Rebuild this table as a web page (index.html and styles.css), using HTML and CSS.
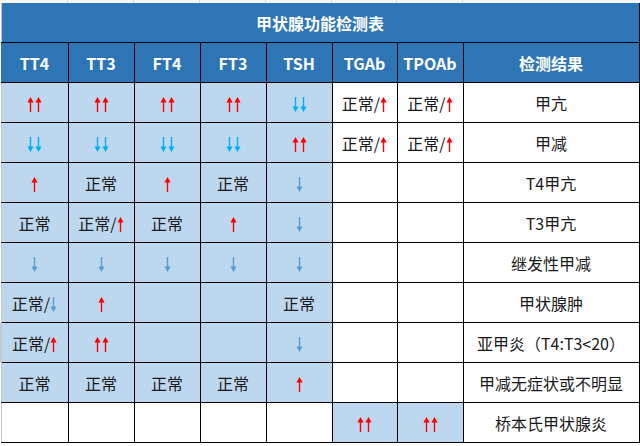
FILE: index.html
```html
<!DOCTYPE html>
<html lang="zh-CN">
<head>
<meta charset="utf-8">
<title>甲状腺功能检测表</title>
<link rel="stylesheet" href="styles.css">
</head>
<body>
<svg class="defs" width="0" height="0" aria-hidden="true">
  <defs>
    <symbol id="up" viewBox="0 0 7 15">
      <path d="M3.5 0 L0.4 5.6 L2.8 5.6 L2.8 15 L4.2 15 L4.2 5.6 L6.6 5.6 Z"/>
    </symbol>
    <symbol id="dn" viewBox="0 0 7 15">
      <path d="M3.5 15 L0.4 9.4 L2.8 9.4 L2.8 0 L4.2 0 L4.2 9.4 L6.6 9.4 Z"/>
    </symbol>
  </defs>
</svg>
<div class="strip"><span></span><span></span><span></span><span></span><span></span><span></span><span></span><span></span></div>
<table class="sheet">
  <colgroup>
    <col class="c67"><col class="c66"><col class="c66"><col class="c66"><col class="c66"><col class="c65"><col class="c66"><col class="c176">
  </colgroup>
  <tr class="title"><td colspan="8">甲状腺功能检测表</td></tr>
  <tr class="head">
    <td>TT4</td><td>TT3</td><td>FT4</td><td>FT3</td><td>TSH</td><td>TGAb</td><td>TPOAb</td><td>检测结果</td>
  </tr>
  <tr>
    <td class="b"><span class="r"><svg class="ar"><use href="#up"/></svg><svg class="ar"><use href="#up"/></svg></span></td>
    <td class="b"><span class="r"><svg class="ar"><use href="#up"/></svg><svg class="ar"><use href="#up"/></svg></span></td>
    <td class="b"><span class="r"><svg class="ar"><use href="#up"/></svg><svg class="ar"><use href="#up"/></svg></span></td>
    <td class="b"><span class="r"><svg class="ar"><use href="#up"/></svg><svg class="ar"><use href="#up"/></svg></span></td>
    <td class="b"><span class="c"><svg class="ar"><use href="#dn"/></svg><svg class="ar"><use href="#dn"/></svg></span></td>
    <td>正常/<span class="r"><svg class="ar"><use href="#up"/></svg></span></td>
    <td>正常/<span class="r"><svg class="ar"><use href="#up"/></svg></span></td>
    <td>甲亢</td>
  </tr>
  <tr>
    <td class="b"><span class="c"><svg class="ar"><use href="#dn"/></svg><svg class="ar"><use href="#dn"/></svg></span></td>
    <td class="b"><span class="c"><svg class="ar"><use href="#dn"/></svg><svg class="ar"><use href="#dn"/></svg></span></td>
    <td class="b"><span class="c"><svg class="ar"><use href="#dn"/></svg><svg class="ar"><use href="#dn"/></svg></span></td>
    <td class="b"><span class="c"><svg class="ar"><use href="#dn"/></svg><svg class="ar"><use href="#dn"/></svg></span></td>
    <td class="b"><span class="r"><svg class="ar"><use href="#up"/></svg><svg class="ar"><use href="#up"/></svg></span></td>
    <td>正常/<span class="r"><svg class="ar"><use href="#up"/></svg></span></td>
    <td>正常/<span class="r"><svg class="ar"><use href="#up"/></svg></span></td>
    <td>甲减</td>
  </tr>
  <tr>
    <td class="b"><span class="r"><svg class="ar"><use href="#up"/></svg></span></td>
    <td class="b">正常</td>
    <td class="b"><span class="r"><svg class="ar"><use href="#up"/></svg></span></td>
    <td class="b">正常</td>
    <td class="b"><span class="s"><svg class="ar"><use href="#dn"/></svg></span></td>
    <td></td><td></td>
    <td>T4甲亢</td>
  </tr>
  <tr>
    <td class="b">正常</td>
    <td class="b">正常/<span class="r"><svg class="ar"><use href="#up"/></svg></span></td>
    <td class="b">正常</td>
    <td class="b"><span class="r"><svg class="ar"><use href="#up"/></svg></span></td>
    <td class="b"><span class="s"><svg class="ar"><use href="#dn"/></svg></span></td>
    <td></td><td></td>
    <td>T3甲亢</td>
  </tr>
  <tr>
    <td class="b"><span class="s"><svg class="ar"><use href="#dn"/></svg></span></td>
    <td class="b"><span class="s"><svg class="ar"><use href="#dn"/></svg></span></td>
    <td class="b"><span class="s"><svg class="ar"><use href="#dn"/></svg></span></td>
    <td class="b"><span class="s"><svg class="ar"><use href="#dn"/></svg></span></td>
    <td class="b"><span class="s"><svg class="ar"><use href="#dn"/></svg></span></td>
    <td></td><td></td>
    <td>继发性甲减</td>
  </tr>
  <tr>
    <td class="b">正常/<span class="s"><svg class="ar"><use href="#dn"/></svg></span></td>
    <td class="b"><span class="r"><svg class="ar"><use href="#up"/></svg></span></td>
    <td class="b"></td>
    <td class="b"></td>
    <td class="b">正常</td>
    <td></td><td></td>
    <td>甲状腺肿</td>
  </tr>
  <tr>
    <td class="b sel">正常/<span class="r"><svg class="ar"><use href="#up"/></svg></span></td>
    <td class="b"><span class="r"><svg class="ar"><use href="#up"/></svg><svg class="ar"><use href="#up"/></svg></span></td>
    <td class="b"></td>
    <td class="b"></td>
    <td class="b"><span class="s"><svg class="ar"><use href="#dn"/></svg></span></td>
    <td></td><td></td>
    <td>亚甲炎（T4:T3&lt;20）</td>
  </tr>
  <tr>
    <td class="b">正常</td>
    <td class="b">正常</td>
    <td class="b">正常</td>
    <td class="b">正常</td>
    <td class="b"><span class="r"><svg class="ar"><use href="#up"/></svg></span></td>
    <td></td><td></td>
    <td>甲减无症状或不明显</td>
  </tr>
  <tr>
    <td></td><td></td><td></td><td></td><td></td>
    <td class="b"><span class="r"><svg class="ar"><use href="#up"/></svg><svg class="ar"><use href="#up"/></svg></span></td>
    <td class="b"><span class="r"><svg class="ar"><use href="#up"/></svg><svg class="ar"><use href="#up"/></svg></span></td>
    <td>桥本氏甲状腺炎</td>
  </tr>
</table>
</body>
</html>
```
FILE: styles.css
```css
html, body {
  margin: 0;
  padding: 0;
  background: #ffffff;
}

body {
  width: 640px;
  height: 446px;
  overflow: hidden;
  font-family: "Noto Sans CJK SC", "Noto Sans", sans-serif;
}

.defs {
  position: absolute;
  width: 0;
  height: 0;
  overflow: hidden;
}

.strip {
  display: grid;
  grid-template-columns: 67px 66px 66px 66px 66px 65px 66px 176px;
  height: 3px;
  background: #f7f7f7;
}

.strip span + span {
  border-left: 1px solid #d9d9d9;
}

.sheet {
  border-collapse: collapse;
  table-layout: fixed;
  width: 639px;
}

.c67 { width: 67px; }
.c66 { width: 66px; }
.c65 { width: 65px; }
.c176 { width: 176px; }

.sheet td {
  height: 39px;
  padding: 0;
  border: 1px solid #000;
  text-align: center;
  vertical-align: middle;
  font-size: 16px;
  line-height: 20px;
  color: #1a1a1a;
  white-space: nowrap;
  overflow: hidden;
}

.sheet tr td:first-child {
  border-left-color: #c8c8c8;
}

.sheet .title td {
  height: 39px;
  background: #2e75b6;
  color: #ffffff;
  font-weight: 700;
  border-top: 0;
  border-left-color: #2e75b6;
}

.sheet .head td {
  background: #2e75b6;
  color: #ffffff;
  font-weight: 700;
}

.sheet .head td:first-child {
  border-left-color: #2e75b6;
}

.sheet td.b {
  background: #bdd7ee;
}

.sheet td.sel {
  border-left: 2px solid #217346;
}

.ar {
  display: inline-block;
  width: 7px;
  height: 15px;
  vertical-align: -2px;
  fill: currentColor;
}

.ar + .ar {
  margin-left: 1px;
}

.r { color: #ff0000; }
.c { color: #00b0f0; }
.s { color: #5b9bd5; }
```
